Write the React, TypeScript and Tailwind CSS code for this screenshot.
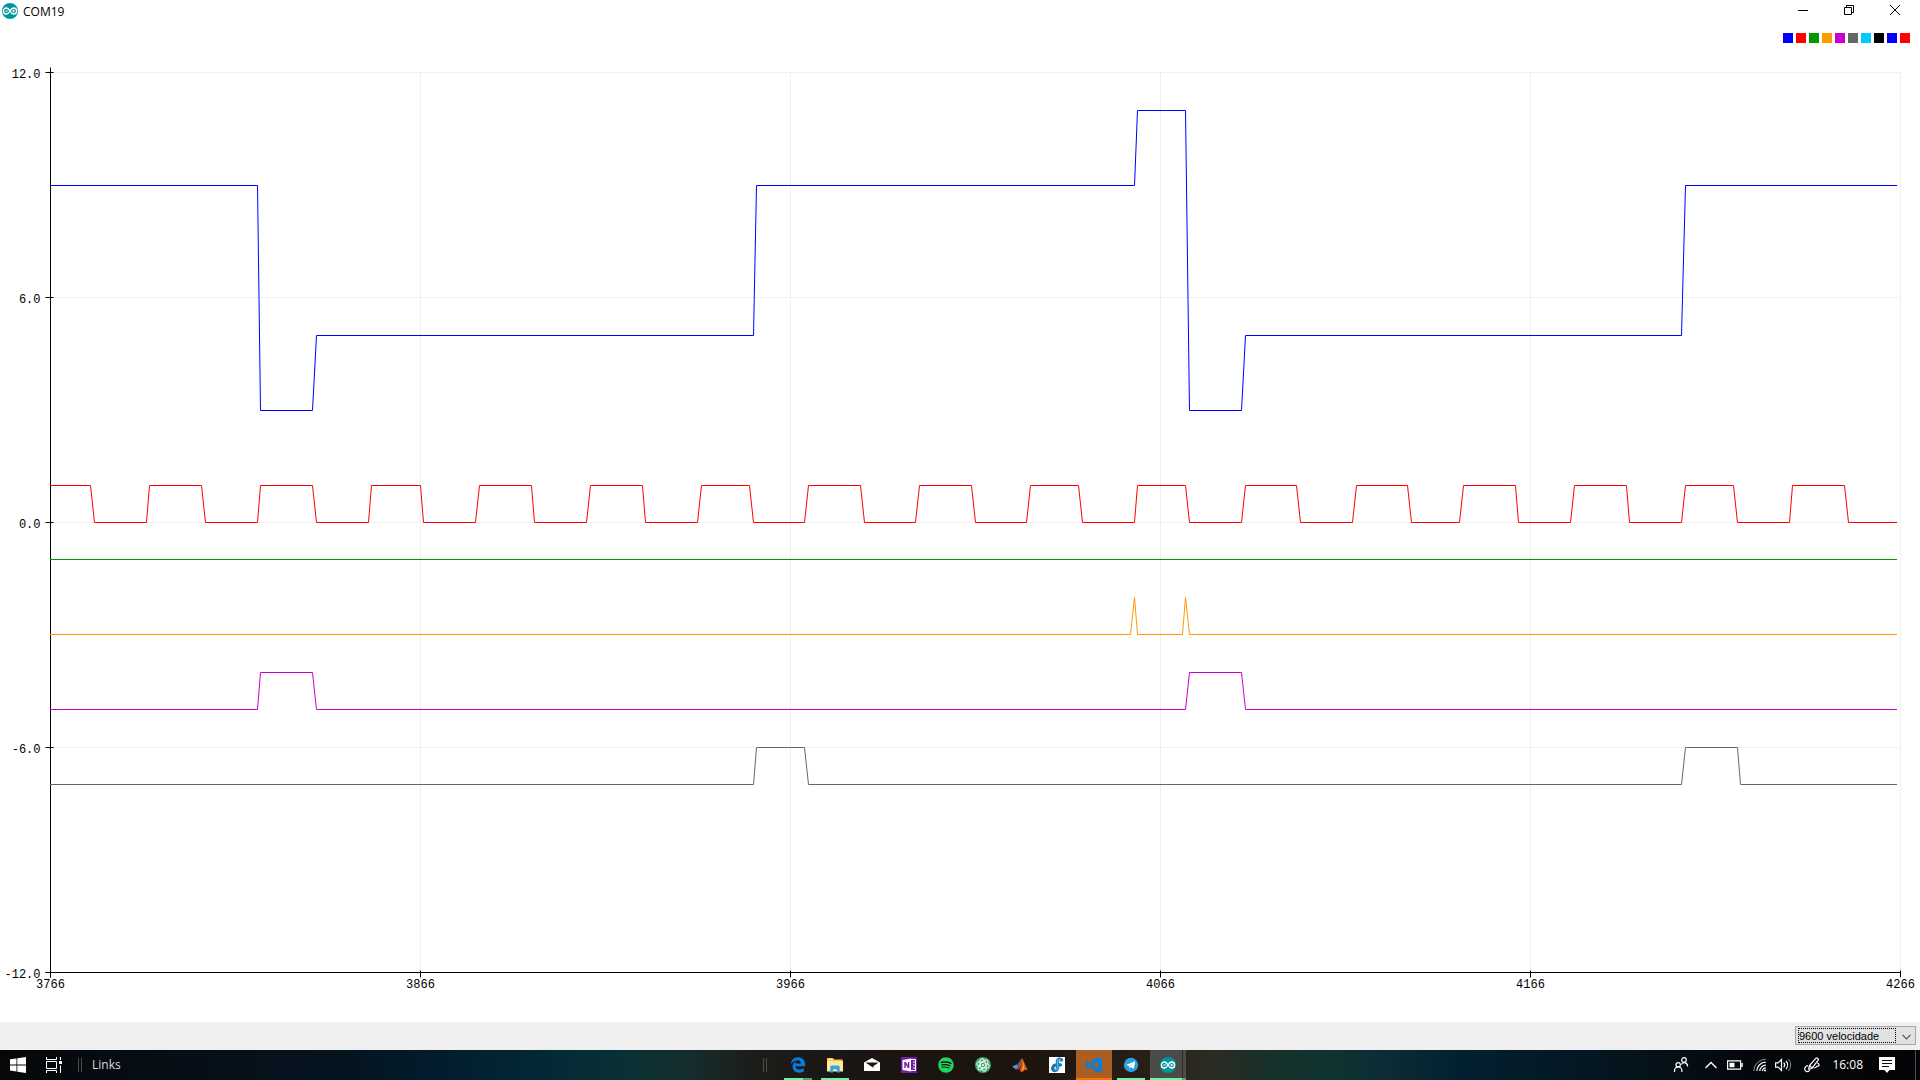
import { useLayoutEffect, useRef, useState } from "react";
import type { ReactNode } from "react";
import { FaEdgeLegacy, FaSpotify } from "react-icons/fa";

const LEGEND = [
  "bg-[#0000ff]",
  "bg-[#ff0000]",
  "bg-[#009900]",
  "bg-[#ff9900]",
  "bg-[#cc00cc]",
  "bg-[#666666]",
  "bg-[#00ccff]",
  "bg-black",
  "bg-[#0000ff]",
  "bg-[#ff0000]",
];

type Point = [sample: number, value: number];

const FIRST = 3766;
const SAMPLES = 500;
const LAST = SAMPLES - 1;

/* Last sample before each level change of the square wave */
const RED_EDGES = [
  11, 26, 41, 56, 71, 86, 100, 115, 130, 145, 160, 175, 189, 204, 219, 234, 249,
  264, 278, 293, 307, 322, 337, 352, 367, 381, 396, 411, 426, 441, 455, 470, 485,
];

function squareWave(edges: number[], start: number, other: number): Point[] {
  const pts: Point[] = [[0, start]];
  let level = start;
  for (const e of edges) {
    const next = level === start ? other : start;
    pts.push([e, level], [e + 1, next]);
    level = next;
  }
  pts.push([LAST, level]);
  return pts;
}

const SERIES: { color: string; points: Point[] }[] = [
  {
    color: "#0000ff",
    points: [
      [0, 9], [56, 9], [57, 3], [71, 3], [72, 5], [190, 5], [191, 9], [293, 9],
      [294, 11], [307, 11], [308, 3], [322, 3], [323, 5], [441, 5], [442, 9], [LAST, 9],
    ],
  },
  { color: "#ff0000", points: squareWave(RED_EDGES, 1, 0) },
  { color: "#009900", points: [[0, -1], [LAST, -1]] },
  {
    color: "#ff9900",
    points: [
      [0, -3], [292, -3], [293, -2], [294, -3], [306, -3], [307, -2], [308, -3], [LAST, -3],
    ],
  },
  { color: "#cc00cc", points: squareWave([56, 71, 307, 322], -5, -4) },
  { color: "#666666", points: squareWave([190, 204, 441, 456], -7, -6) },
];

const MARGIN = { left: 50, right: 20, top: 29, bottom: 50 };

function Plot() {
  const box = useRef<HTMLDivElement>(null);
  const [size, setSize] = useState({ w: 0, h: 0 });

  useLayoutEffect(() => {
    const el = box.current;
    if (!el) return;
    const measure = () => setSize({ w: el.clientWidth, h: el.clientHeight });
    measure();
    const observer = new ResizeObserver(measure);
    observer.observe(el);
    return () => observer.disconnect();
  }, []);

  const { w, h } = size;
  const plotW = w - MARGIN.left - MARGIN.right;
  const plotH = h - MARGIN.top - MARGIN.bottom;
  const mid = MARGIN.top + plotH / 2;
  const px = (i: number) => Math.floor(MARGIN.left + (i * plotW) / SAMPLES) + 0.5;
  const py = (v: number) => Math.floor(mid) - Math.trunc((v * plotH) / 24) + 0.5;
  const left = px(0);
  const right = px(SAMPLES);
  const top = py(12);
  const bottom = py(-12);
  const xTicks = [0, 100, 200, 300, 400, 500];
  const yTicks = [12, 6, 0, -6, -12];

  return (
    <div ref={box} className="min-h-0 flex-1 overflow-hidden">
      {w > 0 && (
        <svg width={w} height={h} className="block" role="img" aria-label="Serial plotter">
          <g stroke="#f0f0f0">
            {yTicks.slice(0, 4).map((v) => (
              <line key={v} x1={left} x2={right} y1={py(v)} y2={py(v)} />
            ))}
            {xTicks.slice(1).map((i) => (
              <line key={i} x1={px(i)} x2={px(i)} y1={top} y2={bottom} />
            ))}
          </g>
          <g stroke="#000">
            <line x1={left} x2={left} y1={top - 5} y2={bottom + 5} />
            <line x1={left - 5} x2={right} y1={bottom} y2={bottom} />
            {yTicks.map((v) => (
              <line key={v} x1={left - 5} x2={left + 3} y1={py(v)} y2={py(v)} />
            ))}
            {xTicks.map((i) => (
              <line key={i} x1={px(i)} x2={px(i)} y1={bottom - 2} y2={bottom + 5} />
            ))}
          </g>
          <g className="fill-black font-['Liberation_Mono',monospace] text-[12px]">
            {yTicks.map((v) => (
              <text key={v} x={left - 10} y={py(v) + 5} textAnchor="end">
                {v.toFixed(1)}
              </text>
            ))}
            {xTicks.map((i) => (
              <text key={i} x={px(i)} y={bottom + 15} textAnchor="middle">
                {FIRST + i}
              </text>
            ))}
          </g>
          <g fill="none" strokeLinecap="square">
            {SERIES.map((s) => (
              <polyline
                key={s.color}
                stroke={s.color}
                points={s.points.map(([i, v]) => `${px(i)},${py(v)}`).join(" ")}
              />
            ))}
          </g>
        </svg>
      )}
    </div>
  );
}

function ArduinoIcon() {
  return (
    <svg viewBox="0 0 16 16" className="size-4">
      <circle cx="8" cy="8" r="8" fill="#00979c" />
      <g fill="none" stroke="#fff" strokeWidth="1.3">
        <path d="M8 8C6.900 6 5.900 5 4.400 5a3 3 0 0 0 0 6C5.900 11 6.900 10 8 8s2.100-3 3.600-3a3 3 0 0 1 0 6C10.100 11 9.100 10 8 8z" />
        <path d="M3.300 8h2.400M10.300 8h2.600M11.600 6.700v2.600" strokeWidth="1" />
      </g>
    </svg>
  );
}

function FolderIcon() {
  return (
    <svg viewBox="0 0 16 16" className="size-4">
      <path d="M0 1h6l1 1.500h8.500V14H0z" fill="#f6c745" />
      <path d="M1.500 2h4v1h-4z" fill="#fff3c4" />
      <path d="M0 4h16v10.500H0z" fill="#ffe79c" />
      <path d="M3.300 15.500V10a1.500 1.500 0 0 1 1.500-1.500h6.400A1.500 1.500 0 0 1 12.700 10v5.500h-2.700v-3.200H6v3.200z" fill="#2ea7e6" />
    </svg>
  );
}

function MailIcon() {
  return (
    <svg viewBox="0 0 16 16" className="size-4">
      <path d="M0 5.500 8 1l8 4.500V14H0z" fill="#fff" />
      <path d="M1.500 5.500h13L9 9.500l1.500 1.800L7 9.200z" fill="#1a1511" />
    </svg>
  );
}

function OneNoteIcon() {
  return (
    <svg viewBox="0 0 16 16" className="size-4">
      <path d="M0 0h16v16H0z" fill="#7719aa" />
      <path d="M9.500 2.500h5v11h-5" fill="none" stroke="#fff" />
      <path d="M12 5h2.500M12 8h2.500M12 11h2.500" stroke="#fff" />
      <path d="M1.500 3 10 1.500v13L1.500 13z" fill="#fff" />
      <path d="M3.300 11V5h1.600l2 3.500V5h1.400v6H6.800l-2.100-3.600V11z" fill="#7719aa" />
    </svg>
  );
}

function AtomIcon() {
  return (
    <svg viewBox="0 0 16 16" className="size-4">
      <circle cx="8" cy="8" r="8" fill="#3fa56c" />
      <g fill="none" stroke="#e8fff0" strokeWidth="1">
        <ellipse cx="8" cy="8" rx="6.300" ry="2.700" transform="rotate(15 8 8)" />
        <ellipse cx="8" cy="8" rx="6.300" ry="2.700" transform="rotate(75 8 8)" />
        <ellipse cx="8" cy="8" rx="6.300" ry="2.700" transform="rotate(135 8 8)" />
      </g>
      <circle cx="8" cy="8" r="1" fill="#fff" />
    </svg>
  );
}

function MatlabIcon() {
  return (
    <svg viewBox="0 0 16 16" className="size-4">
      <path d="M0 9.500 4.500 7.500 7 10l-3 2.500z" fill="#4a9bd8" />
      <path d="M4.500 7.500C6.500 6.800 8 3 10 1L8 9l-4 3.500 2-3z" fill="#2f62a3" />
      <path d="M10 1c1.500 1.500 3.500 8 6 12.500-2-1.500-3.500-1-5 1-1 1.200-2 1-2.500-.5-.8-2-2.500-2-4.500-1.500C7 11 8.500 5 10 1z" fill="#d9531e" />
      <path d="M10.200 1.500c-.2 4-1.200 7.500-4.500 10.500 1.300 0 1 .5 1.800 1.500C9 10 10.300 6 10.200 1.500z" fill="#8f1d13" />
      <path d="M10.500 3c1 3 1.800 6 2 9-1.200.5-2 2-3 2.500C11 11 11.200 7 10.500 3z" fill="#f6a32c" />
    </svg>
  );
}

function DfIcon() {
  return (
    <svg viewBox="0 0 16 16" className="size-4">
      <path d="M0 0h16v16H0z" fill="#fff" />
      <g fill="none" strokeLinecap="round">
        <path d="M12.500 3C10.500 1.200 8.300 2 8.300 4.600L8.800 9c.3 3-1.200 4.600-3 4.600S3.200 12 4 10.200s2.200-2.400 4-2.200l3.500-.2" stroke="#1d75b0" strokeWidth="3.200" />
        <path d="M11.800 2.800C10 1.800 8.300 2.500 8.400 4.600L8.800 9c.3 2.700-1 4.200-2.600 4.200" stroke="#45bfe8" strokeWidth="1.400" />
      </g>
    </svg>
  );
}

function VsCodeIcon() {
  return (
    <svg viewBox="0 0 16 16" className="size-4">
      <path
        fill="#0a7fd4"
        fillRule="evenodd"
        d="M11.500 0 16 1.800v12.400L11.500 16 4.600 9.900 1.600 12 0 11.200V4.800L1.600 4l3 2.100zM12 4.600 7.400 8l4.600 3.400zM1.600 6.200v3.600L3.500 8z"
      />
    </svg>
  );
}

function TelegramIcon() {
  return (
    <svg viewBox="0 0 16 16" className="size-4">
      <circle cx="8" cy="8" r="7.200" fill="#2b9fdb" />
      <path d="M3 8.100 12.300 4.300 10.800 12 8 9.900l-1.500 1.500-.4-2.400z" fill="#fff" />
      <path d="m6.100 9 4.500-3.400L7.200 9.400l-.7 2z" fill="#b8d9ec" />
    </svg>
  );
}

function TaskButton({
  label,
  state = "idle",
  children,
}: {
  label: string;
  state?: "idle" | "open" | "stacked" | "alert" | "active";
  children: ReactNode;
}) {
  const tile =
    state === "alert" ? "bg-[#a95e24]" : state === "active" ? "bg-[#4b4b49]" : "";
  return (
    <button
      type="button"
      aria-label={label}
      className={`relative flex h-full w-9 items-center justify-center ${tile}`}
    >
      {children}
      {state === "open" && <span className="absolute inset-x-1 bottom-0 h-0.5 bg-[#76f29a]" />}
      {state === "stacked" && (
        <span className="absolute inset-x-1 bottom-0 flex h-0.5">
          <span className="flex-1 bg-[#76f29a]" />
          <span className="w-[9px] bg-[#4fa76b]" />
        </span>
      )}
      {state === "alert" && <span className="absolute inset-x-0 bottom-0 h-0.5 bg-[#ff7300]" />}
      {state === "active" && (
        <>
          <span className="absolute inset-y-0 right-[3px] w-px bg-[#2b2b29]" />
          <span className="absolute inset-x-0 bottom-0 flex h-0.5">
            <span className="flex-1 bg-[#76f29a]" />
            <span className="w-1 bg-[#4fa76b]" />
          </span>
        </>
      )}
    </button>
  );
}

function Grip() {
  return <span className="h-3.5 w-1 shrink-0 border-x border-[#4a4c4c]" />;
}

function Taskbar() {
  return (
    <nav
      aria-label="Taskbar"
      className="flex h-[30px] shrink-0 items-center bg-[linear-gradient(90deg,#050708_0%,#06101a_12%,#04141f_18%,#021c2e_23%,#042a36_29%,#0a3134_33%,#152d2c_36%,#1c1d1a_39%,#1a1613_44%,#1c130d_53%,#272019_60%,#2b2b23_63%,#173029_66%,#10332f_69%,#0d2c36_72%,#02202f_76%,#041a28_80%,#05121a_86%,#04070b_91%,#030405_100%)] font-['Open_Sans',sans-serif] text-xs text-white"
    >
      <div className="flex h-full w-[39.75%] shrink-0 items-center">
        <button type="button" aria-label="Start" className="flex h-full w-9 items-center justify-center">
          <svg viewBox="0 0 16 16" className="size-4" fill="#fff">
            <path d="M0 2.300 6.500 1.400v6.100H0zM7.300 1.300 16 0v7.500H7.300zM0 8.400h6.500v6.100L0 13.600zM7.300 8.400H16V16l-8.700-1.300z" />
          </svg>
        </button>
        <button type="button" aria-label="Task View" className="flex h-full w-9 items-center justify-center">
          <svg viewBox="0 0 16 16" className="size-4" fill="none" stroke="#fff">
            <path d="M.5 0v2.500h10V0M.5 16v-2.500h10V16M.5 4.500h10v7H.5zM14.500 0v3M14.500 8.500V16" />
            <path d="M13 4h3v3h-3z" fill="#fff" stroke="none" />
          </svg>
        </button>
        <div className="flex items-center gap-2.5 pl-1.5">
          <Grip />
          <a href="#links" className="text-[#dcdcdc]">
            Links
          </a>
        </div>
      </div>
      <Grip />
      <div className="flex h-full items-center gap-px pl-[13px]">
        <TaskButton label="Edge" state="stacked">
          <FaEdgeLegacy className="size-4 text-[#0a7be0]" />
        </TaskButton>
        <TaskButton label="File Explorer" state="open">
          <FolderIcon />
        </TaskButton>
        <TaskButton label="Mail">
          <MailIcon />
        </TaskButton>
        <TaskButton label="OneNote">
          <OneNoteIcon />
        </TaskButton>
        <TaskButton label="Spotify">
          <FaSpotify className="size-4 text-[#1ed760]" />
        </TaskButton>
        <TaskButton label="Atom">
          <AtomIcon />
        </TaskButton>
        <TaskButton label="MATLAB">
          <MatlabIcon />
        </TaskButton>
        <TaskButton label="Draftsight">
          <DfIcon />
        </TaskButton>
        <TaskButton label="Visual Studio Code" state="alert">
          <VsCodeIcon />
        </TaskButton>
        <TaskButton label="Telegram" state="open">
          <TelegramIcon />
        </TaskButton>
        <TaskButton label="Arduino" state="active">
          <ArduinoIcon />
        </TaskButton>
      </div>
      <div className="ml-auto flex h-full items-center">
        <button type="button" aria-label="People" className="mr-4">
          <svg viewBox="0 0 16 16" className="size-4" fill="none" stroke="#fff" strokeWidth="1.200">
            <circle cx="5.200" cy="7.800" r="2.200" />
            <path d="M1.500 15v-1.500a3.700 3.700 0 0 1 7.400 0V15" />
            <circle cx="11" cy="3" r="2.300" />
            <path d="M8.500 7.300C10 5 14.600 5 14.600 9.500" />
          </svg>
        </button>
        <button type="button" aria-label="Show hidden icons" className="mr-2.5">
          <svg viewBox="0 0 12 8" className="h-2 w-3" fill="none" stroke="#fff" strokeWidth="1.300">
            <path d="M.5 7 6 1.500 11.500 7" />
          </svg>
        </button>
        <button type="button" aria-label="Battery" className="mr-2.5">
          <svg viewBox="0 0 16 10" className="h-2.5 w-4" fill="none" stroke="#fff">
            <path d="M.6 .8h13v8.400H.6z" strokeWidth="1.200" />
            <path d="M2.500 2.800h5v4.400h-5z" fill="#fff" stroke="none" />
            <path d="M15 3v4" strokeWidth="1.500" />
          </svg>
        </button>
        <button type="button" aria-label="Network" className="mr-2">
          <svg viewBox="0 0 14 14" className="size-3.5" fill="none" stroke="#fff">
            <path d="M.8 13A12 12 0 0 1 12.800 1.200" strokeOpacity=".55" />
            <path d="M3.800 13a9 9 0 0 1 9-8.800M6.800 13a6 6 0 0 1 6-5.900M9.500 13a3.300 3.300 0 0 1 3.300-3.200" strokeWidth="1.200" />
            <circle cx="12" cy="12.600" r="1" fill="#fff" stroke="none" />
          </svg>
        </button>
        <button type="button" aria-label="Volume" className="mr-3">
          <svg viewBox="0 0 17 14" className="h-3.5 w-[17px]" fill="none" stroke="#fff">
            <path d="M.6 4.800h2.600l3.300-3.300v11L3.200 9.200H.6z" strokeWidth="1.200" />
            <path d="M8.700 4.700a3.500 3.500 0 0 1 0 4.600M11 3a6 6 0 0 1 0 8" strokeWidth="1.200" />
            <path d="M13.400 1a9 9 0 0 1 0 12" strokeOpacity=".5" />
          </svg>
        </button>
        <button type="button" aria-label="Ink workspace" className="mr-3">
          <svg viewBox="0 0 16 16" className="size-4" fill="none" stroke="#fff" strokeWidth="1.200">
            <path d="M4.500 12.500 5.500 8.500 12 1.200c.8-.9 3 1 2.200 2L8 11.200 4.500 12.500M5.500 8.500 8 11" />
            <path d="M4 8.500c-2.300.6-3.500 2.200-3.200 4 .3 2.400 3.500 3 5 .5M13 6c2.500.2 2.800 2.800.8 3.200-1.800.4-2.300 2-4.300 1.800" />
          </svg>
        </button>
        <time className="mr-4 whitespace-nowrap">16:08</time>
        <button type="button" aria-label="Notifications" className="mr-5">
          <svg viewBox="0 0 16 16" className="size-4">
            <path d="M0 0h16v13h-5.500L8 16l-2.500-3H0z" fill="#fff" />
            <path d="M3 3.500h10M3 6.500h10M3 9.500h7" stroke="#0a0c10" />
          </svg>
        </button>
        <span className="mr-1 h-full w-px bg-[#4a4c50]" />
      </div>
    </nav>
  );
}

export default function App() {
  return (
    <div className="flex h-screen flex-col bg-white">
      <header className="flex h-[22px] shrink-0 items-center px-0.5 font-['Open_Sans',sans-serif] text-xs text-black">
        <ArduinoIcon />
        <h1 className="pl-[5px] pt-px">COM19</h1>
        <div className="ml-auto flex h-full">
          <button type="button" aria-label="Minimize" className="flex w-[46px] items-center justify-center pb-0.5">
            <svg viewBox="0 0 10 10" className="size-2.5" stroke="#000">
              <path d="M0 5.500h10" />
            </svg>
          </button>
          <button type="button" aria-label="Restore" className="flex w-[46px] items-center justify-center pb-0.5">
            <svg viewBox="0 0 10 10" className="size-2.5" fill="none" stroke="#000">
              <path d="M.5 2.500h7v7h-7zM2.500 2.500v-2h7v7h-2" />
            </svg>
          </button>
          <button type="button" aria-label="Close" className="flex w-[46px] items-center justify-center pb-0.5">
            <svg viewBox="0 0 10 10" className="size-2.5" stroke="#000">
              <path d="M0 0 10 10M10 0 0 10" />
            </svg>
          </button>
        </div>
      </header>
      <main className="flex min-h-0 flex-1 flex-col">
        <div className="flex shrink-0 justify-end gap-[3px] pr-2.5 pt-[11px]">
          {LEGEND.map((c, i) => (
            <span key={i} className={`size-2.5 ${c}`} />
          ))}
        </div>
        <Plot />
      </main>
      <footer className="flex h-7 shrink-0 justify-end bg-[#efefef] pr-1 pt-1">
        <div className="relative">
          <select
            aria-label="Velocidade"
            className="block h-[19px] w-[121px] appearance-none border border-[#a5a5ab] bg-[#e1e1e1] pl-[3px] font-['Liberation_Sans',sans-serif] text-[11px] leading-4 text-black outline-none"
          >
            <option>9600 velocidade</option>
          </select>
          <span className="pointer-events-none absolute left-[3px] top-0.5 h-[15px] w-[98px] border border-dotted border-black" />
          <svg viewBox="0 0 9 6" className="pointer-events-none absolute right-[5px] top-2 h-1.5 w-[9px]" fill="none" stroke="#555">
            <path d="M.5.8 4.500 4.800 8.500.8" strokeWidth="1.200" />
          </svg>
        </div>
      </footer>
      <Taskbar />
    </div>
  );
}
